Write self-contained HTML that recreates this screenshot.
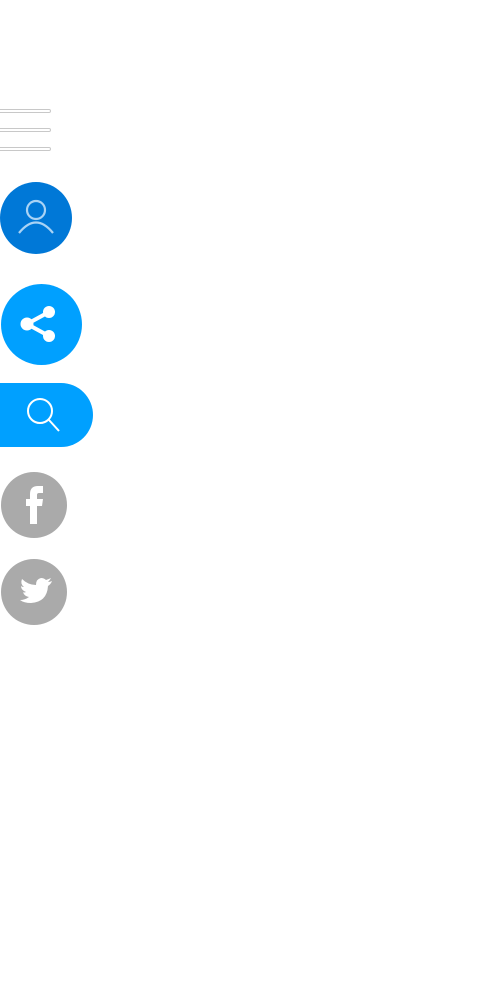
<!DOCTYPE html><html><head><style>
body{margin:0;width:500px;height:1000px;background:#fff;position:relative;overflow:hidden}
.l{position:absolute;left:0;width:51px;height:4px;border:1px solid #c8c8c8;border-left:none;border-radius:0 2px 2px 0;box-sizing:border-box}
.c{position:absolute;border-radius:50%}
</style></head><body>
<div class="l" style="top:109px"></div>
<div class="l" style="top:128px"></div>
<div class="l" style="top:147px"></div>
<div class="c" style="left:0;top:182px;width:72px;height:72px;background:#0078d7"></div>
<svg style="position:absolute;left:0;top:182px" width="72" height="72"><g fill="none" stroke="#a9d3f5" stroke-width="2.2"><circle cx="36" cy="28" r="9"/><path d="M19 51 Q36 30 53 51"/></g></svg>
<div class="c" style="left:1px;top:284px;width:81px;height:81px;background:#00a0ff"></div>
<svg style="position:absolute;left:0;top:284px" width="82" height="82"><g fill="#fff" stroke="#fff"><circle cx="49" cy="28" r="5.5"/><circle cx="27" cy="40" r="6"/><circle cx="49" cy="52" r="5.5"/><path d="M49 28 L27 40 L49 52" fill="none" stroke-width="4"/></g></svg>
<div style="position:absolute;left:0;top:383px;width:93px;height:64px;background:#00a0ff;border-radius:0 32px 32px 0"></div>
<svg style="position:absolute;left:0;top:383px" width="93" height="64"><g fill="none" stroke="#fff" stroke-width="2"><circle cx="40" cy="28" r="12"/><path d="M49 37 L59 48"/></g></svg>
<div class="c" style="left:1px;top:472px;width:66px;height:66px;background:#aaa"></div>
<svg style="position:absolute;left:1px;top:472px" width="66" height="66"><path fill="#fff" d="M29 52 V34 H25 V27 H29 V22 Q29 14 37 14 H42 V21 H38 Q36 21 36 23 V27 H42 L41 34 H36 V52 Z"/></svg>
<div class="c" style="left:1px;top:559px;width:66px;height:66px;background:#aaa"></div>
<svg style="position:absolute;left:1px;top:559px" width="66" height="66"><path fill="#fff" d="M51 22 Q49 23 47 23 Q49 21 50 19 Q48 20 45 21 Q43 19 40 19 Q35 20 35 26 Q27 26 21 20 Q19 25 23 28 Q21 28 20 27 Q20 31 25 33 Q23 34 22 33 Q23 37 28 38 Q24 41 19 41 Q23 44 30 44 Q46 43 47 27 Q50 25 51 22 Z"/></svg>
</body></html>
